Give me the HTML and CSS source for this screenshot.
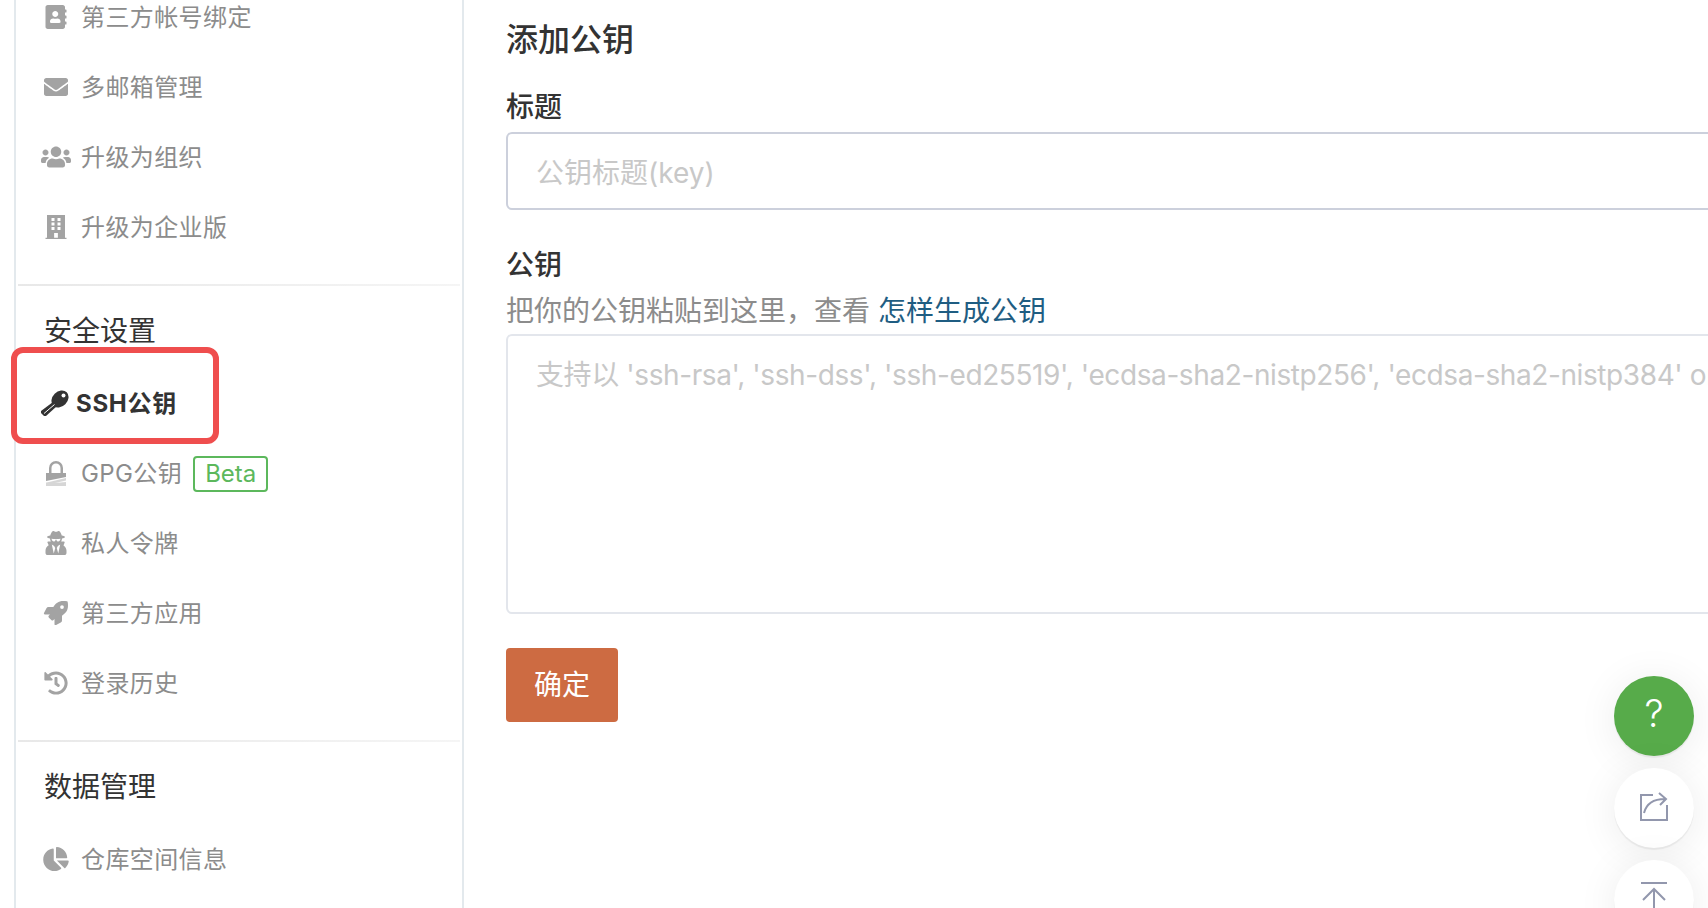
FILE: index.html
```html
<!DOCTYPE html>
<html lang="zh-CN">
<head>
  <meta charset="UTF-8">
  <meta name="viewport" content="width=device-width, initial-scale=1.0">
  <title>SSH公钥</title>
  <link rel="stylesheet" href="styles.css">
</head>
<body>
  <div class="page">
    <aside class="sidebar">
      <!-- page is scrolled: first row starts above the window -->
      <div class="group group-first">
        <a class="item">
          <svg class="icon" viewBox="0 0 448 512"><path d="M436 160c6.6 0 12-5.4 12-12v-40c0-6.6-5.4-12-12-12h-20V48c0-26.5-21.5-48-48-48H48C21.5 0 0 21.5 0 48v416c0 26.5 21.5 48 48 48h320c26.5 0 48-21.5 48-48v-48h20c6.6 0 12-5.4 12-12v-40c0-6.6-5.4-12-12-12h-20v-64h20c6.6 0 12-5.4 12-12v-40c0-6.6-5.4-12-12-12h-20v-64h20zm-228-32c35.3 0 64 28.7 64 64s-28.7 64-64 64-64-28.7-64-64 28.7-64 64-64zm112 236.8c0 10.6-10 19.2-22.4 19.2H118.4C106 384 96 375.4 96 364.8v-19.2c0-31.8 30.1-57.6 67.2-57.6h5c12.3 5.1 25.7 8 39.8 8s27.6-2.9 39.8-8h5c37.1 0 67.2 25.8 67.2 57.6v19.2z"/></svg>
          <span class="item-text">第三方帐号绑定</span>
        </a>
        <a class="item">
          <svg class="icon" viewBox="0 0 512 512"><path d="M502.3 190.8c3.9-3.1 9.7-.2 9.7 4.7V400c0 26.5-21.5 48-48 48H48c-26.5 0-48-21.5-48-48V195.6c0-5 5.7-7.8 9.7-4.7 22.4 17.4 52.1 39.5 154.1 113.6 21.1 15.4 56.7 47.8 92.2 47.6 35.7.3 72-32.8 92.3-47.6 102-74.1 131.6-96.3 154-113.7zM256 320c23.2.4 56.6-29.2 73.4-41.4 132.7-96.3 142.8-104.7 173.4-128.7 5.8-4.5 9.2-11.5 9.2-18.9v-19c0-26.5-21.5-48-48-48H48C21.5 64 0 85.5 0 112v19c0 7.4 3.4 14.3 9.2 18.9 30.6 23.9 40.7 32.4 173.4 128.7 16.8 12.2 50.2 41.8 73.4 41.4z"/></svg>
          <span class="item-text">多邮箱管理</span>
        </a>
        <a class="item">
          <svg class="icon" viewBox="0 0 640 512"><path d="M96 224c35.3 0 64-28.7 64-64s-28.7-64-64-64-64 28.7-64 64 28.7 64 64 64zm448 0c35.3 0 64-28.7 64-64s-28.7-64-64-64-64 28.7-64 64 28.7 64 64 64zm32 32h-64c-17.6 0-33.5 7.1-45.1 18.6 40.3 22.1 68.9 62 75.1 109.4h66c17.7 0 32-14.3 32-32v-32c0-35.3-28.7-64-64-64zm-256 0c61.9 0 112-50.1 112-112S381.9 32 320 32 208 82.1 208 144s50.1 112 112 112zm76.8 32h-8.3c-20.8 10-43.9 16-68.5 16s-47.6-6-68.5-16h-8.3C179.6 288 128 339.6 128 403.2V432c0 26.5 21.5 48 48 48h288c26.5 0 48-21.5 48-48v-28.8c0-63.6-51.6-115.2-115.2-115.2zm-223.7-13.4C161.5 263.1 145.6 256 128 256H64c-35.3 0-64 28.7-64 64v32c0 17.7 14.3 32 32 32h65.9c6.3-47.4 34.9-87.3 75.2-109.4z"/></svg>
          <span class="item-text">升级为组织</span>
        </a>
        <a class="item">
          <svg class="icon" viewBox="0 0 448 512"><path fill-rule="evenodd" d="M32 0h384v484h32v28H0v-28h32zM128 64v64h64V64zm128 0v64h64V64zM128 160v64h64v-64zm128 0v64h64v-64zM128 256v64h64v-64zm128 0v64h64v-64zM184 384v100h80V384z"/></svg>
          <span class="item-text">升级为企业版</span>
        </a>
      </div>

      <div class="group">
        <h3 class="group-title">安全设置</h3>
        <a class="item item-active">
          <svg class="icon-key" viewBox="0 0 28 26"><ellipse cx="19" cy="9" rx="9.500" ry="7.500" transform="rotate(-45 19 9)"/><path d="M12 12l4 4L5 26H3l-3-3v-2z"/><circle cx="22.500" cy="5.500" r="2" fill="#fff"/><path d="M13.500 14.500L3 23.500" stroke="#fff" stroke-width="1" fill="none"/></svg>
          <span class="item-text">SSH公钥</span>
        </a>
        <a class="item">
          <svg class="icon icon-gpg" viewBox="0 0 20 26"><path d="M3 14V8a7 7 0 0 1 14 0v6h-2.500V8a4.500 4.500 0 0 0-9 0v6z"/><path d="M0 13h20v4L0 21z"/><path d="M3 22l17-4v2.500L9 23l11-1v4H0v-3.500z" opacity=".45"/></svg>
          <span class="item-text">GPG公钥</span>
          <span class="badge">Beta</span>
        </a>
        <a class="item">
          <svg class="icon" viewBox="0 0 448 512"><path d="M383.900 308.300l23.900-62.600c4-10.500-3.700-21.700-15-21.700h-58.500c11-18.900 17.800-40.600 17.800-64v-.3c39.200-7.800 64-19.100 64-31.700 0-13.300-27.300-25.100-70.100-33-9.200-32.800-27-65.800-40.600-82.800-9.500-11.900-25.900-15.600-39.500-8.800l-27.600 13.800c-9 4.500-19.600 4.500-28.600 0L182.100 3.400c-13.600-6.800-30-3.100-39.500 8.800-13.500 17-31.400 50-40.600 82.800-42.700 7.900-70 19.700-70 33 0 12.600 24.800 23.900 64 31.700v.3c0 23.400 6.800 45.100 17.800 64H56.300c-11.500 0-19.200 11.700-14.700 22.300l25.800 60.200C27.300 329.800 0 372.700 0 422.400v44.800C0 491.900 20.100 512 44.800 512h358.400c24.700 0 44.800-20.100 44.800-44.800v-44.800c0-48.400-25.800-90.400-64.100-114.100zM176 480l-41.600-192 49.600 32 24 40-32 120zm96 0l-32-120 24-40 49.600-32L272 480zm41.700-298.500c-3.900 11.900-7 24.600-16.500 33.400-10.100 9.300-48 22.400-64-25-2.800-8.400-15.400-8.400-18.300 0-17 50.200-56 32.400-64 25-9.500-8.800-12.700-21.500-16.500-33.400-.8-2.500-6.300-5.700-6.300-5.800v-10.800c28.300 3.600 61 5.800 96 5.800s67.700-2.100 96-5.800v10.800c-.1.1-5.600 3.200-6.400 5.800z"/></svg>
          <span class="item-text">私人令牌</span>
        </a>
        <a class="item">
          <svg class="icon" viewBox="0 0 512 512"><path d="M505.050 19.100a15.890 15.890 0 0 0-12.200-12.200C460.650 0 435.460 0 410.360 0c-103.200 0-165.100 55.200-211.290 128H94.870A48 48 0 0 0 52 154.490l-49.420 98.800A24 24 0 0 0 24.070 288h103.770l-22.470 22.470a32 32 0 0 0 0 45.250l50.900 50.910a32 32 0 0 0 45.260 0L224 384.160V488a24 24 0 0 0 34.700 21.490l98.700-49.390a47.910 47.910 0 0 0 26.500-42.900V312.790c72.590-46.300 128-108.400 128-211.090.1-25.200.1-50.400-6.850-82.600zM384 168a40 40 0 1 1 40-40 40 40 0 0 1-40 40z"/></svg>
          <span class="item-text">第三方应用</span>
        </a>
        <a class="item">
          <svg class="icon" viewBox="0 0 512 512"><path d="M504 255.531c.253 136.640-111.180 248.372-247.820 248.468-59.015.042-113.223-20.530-155.822-54.911-11.077-8.940-11.905-25.541-1.839-35.607l11.267-11.267c8.609-8.609 22.353-9.551 31.891-1.984C173.062 425.135 212.781 440 256 440c101.705 0 184-82.311 184-184 0-101.705-82.311-184-184-184-48.814 0-93.149 18.969-126.068 49.932l50.754 50.754c10.080 10.080 2.941 27.314-11.313 27.314H24c-8.837 0-16-7.163-16-16V38.627c0-14.254 17.234-21.393 27.314-11.314l49.372 49.372C129.209 34.136 189.552 8 256 8c136.810 0 247.747 110.780 248 247.531zm-180.912 78.784l9.823-12.630c8.138-10.463 6.253-25.542-4.210-33.679L288 256.349V152c0-13.255-10.745-24-24-24h-16c-13.255 0-24 10.745-24 24v135.651l65.409 50.874c10.463 8.137 25.541 6.253 33.679-4.210z"/></svg>
          <span class="item-text">登录历史</span>
        </a>
      </div>

      <div class="group group-last">
        <h3 class="group-title">数据管理</h3>
        <a class="item">
          <svg class="icon" viewBox="0 0 544 512"><path d="M527.790 288H290.500l158.030 158.030c6.040 6.040 15.980 6.530 22.190.68 38.700-36.460 65.320-85.610 73.130-140.860 1.340-9.460-6.510-17.850-16.060-17.850zm-15.830-64.800C503.720 103.740 408.260 8.280 288.800.04 279.680-.59 272 7.100 272 16.240V240h223.770c9.140 0 16.820-7.680 16.190-16.800zM224 288V50.710c0-9.550-8.390-17.400-17.840-16.060C86.990 51.490-4.100 155.600.14 280.370 4.500 408.510 114.830 513.590 243.030 511.980c50.400-.63 96.970-16.870 135.260-44.030 7.900-5.600 8.420-17.230 1.570-24.080L224 288z"/></svg>
          <span class="item-text">仓库空间信息</span>
        </a>
      </div>
    </aside>

    <main class="content">
      <h2 class="title">添加公钥</h2>
      <form class="key-form">
        <label class="field-label" for="keyTitle">标题</label>
        <input class="field-input" type="text" id="keyTitle" placeholder="公钥标题(key)">

        <label class="field-label field-label-second" for="keyBody">公钥</label>
        <p class="help">把你的公钥粘贴到这里，查看 <a class="help-link">怎样生成公钥</a></p>
        <textarea class="field-area" id="keyBody" placeholder="支持以 'ssh-rsa', 'ssh-dss', 'ssh-ed25519', 'ecdsa-sha2-nistp256', 'ecdsa-sha2-nistp384' or 'ecdsa-sha2-nistp521' 开头"></textarea>

        <button class="submit" type="button"><span class="submit-text">确定</span></button>
      </form>
    </main>
  </div>

  <!-- annotation drawn over the screenshot -->
  <div class="highlight"></div>

  <div class="floats">
    <div class="float float-help"><span class="help-mark">?</span></div>
    <div class="float">
      <svg class="float-icon float-share" viewBox="0 0 30 30"><path d="M14 4H2v25h26V14M5 22c2-8 8-14 21-14M20 2l7 6-6 6" fill="none" stroke="#9297ad" stroke-width="2"/></svg>
    </div>
    <div class="float float-top">
      <svg class="float-icon float-up" viewBox="0 0 30 30"><path d="M2 2h26M15 8v30M4 19L15 8l11 11" fill="none" stroke="#9297ad" stroke-width="2"/></svg>
    </div>
  </div>
</body>
</html>
```

FILE: styles.css
```css
html, body {
  margin: 0;
  padding: 0;
  height: 100%;
  overflow: hidden;
  background-color: white;
}
body {
  font-family: Inter, "Noto Sans CJK SC", sans-serif;
  color: #333;
}
.page {
  display: flex;
  height: 908px;
  overflow: hidden;
}
.sidebar {
  flex: none;
  width: 446px;
  margin-left: 14px;
  border-left: 2px solid #e3e9ed;
  border-right: 2px solid #e3e9ed;
}
.group {
  padding-bottom: 22px;
  margin: 0 2px;
  border-bottom: 2px solid transparent;
  border-image: linear-gradient(to right, #e8e8e8, #f5f5f5) 1;
}
.group-first {
  margin-top: -18px;
}
.group-last {
  border-bottom: none;
}
.group-title {
  height: 82px;
  box-sizing: border-box;
  margin: 0;
  padding: 25px 0 0 26px;
  font-size: 28px;
  font-weight: 400;
  line-height: 40px;
  color: #333;
}
.item {
  display: flex;
  align-items: center;
  height: 70px;
  padding-left: 23px;
  font-size: 24px;
  color: #8c8c8c;
}
.item-text {
  padding-bottom: 4px;
  letter-spacing: 0.4px;
}
.icon {
  flex: none;
  width: 30px;
  height: 24px;
  margin-right: 10px;
  fill: #a3a3a3;
}
.icon-gpg {
  height: 26px;
}
.item-active {
  font-weight: 700;
  color: #333;
}
.item-active .item-text {
  letter-spacing: 0.7px;
}
.icon-key {
  flex: none;
  width: 28px;
  height: 26px;
  margin-right: 7px;
  fill: #333;
}
.badge {
  margin: 2px 0 0 11px;
  padding: 0 10px;
  height: 32px;
  line-height: 32px;
  border: 2px solid #5cb85c;
  border-radius: 4px;
  color: #5cb85c;
}
.content {
  flex: 1;
  min-width: 0;
  padding: 18px 0 0 42px;
  overflow: hidden;
}
.title {
  margin: 0;
  font-size: 32px;
  font-weight: 500;
  line-height: 44px;
}
.key-form {
  width: 2000px;
}
.field-label {
  display: block;
  margin-top: 25px;
  font-size: 28px;
  font-weight: 500;
  line-height: 40px;
}
.field-label-second {
  margin-top: 35px;
}
.field-input, .field-area {
  display: block;
  width: 100%;
  box-sizing: border-box;
  padding: 0 28px;
  border-radius: 6px;
  background: white;
  font-family: inherit;
  font-size: 28px;
  color: #333;
}
.field-input {
  height: 78px;
  margin-top: 5px;
  padding-top: 4px;
  border: 2px solid #ccd0dc;
}
.field-area {
  height: 280px;
  margin-top: 3px;
  padding-top: 19px;
  line-height: 40px;
  border: 2px solid #e3e6ec;
  resize: none;
}
.field-area::placeholder {
  letter-spacing: -0.4px;
}
.field-input::placeholder, .field-area::placeholder {
  color: #c8c8c8;
  opacity: 1;
}
.help {
  margin: 6px 0 0;
  font-size: 28px;
  line-height: 40px;
  color: #8c8c8c;
}
.help-link {
  color: #1f5d82;
}
.submit {
  display: block;
  width: 112px;
  height: 74px;
  margin-top: 34px;
  border: none;
  border-radius: 4px;
  background-color: #cd6b42;
  color: white;
  font-family: inherit;
  font-size: 28px;
}
.submit-text {
  display: block;
  padding-bottom: 4px;
}
.highlight {
  position: absolute;
  left: 11px;
  top: 347px;
  width: 208px;
  height: 97px;
  box-sizing: border-box;
  border: 6px solid #ef4e4e;
  border-radius: 12px;
}
.floats {
  position: absolute;
  top: 676px;
  right: 14px;
  display: flex;
  flex-direction: column;
  gap: 12px;
}
.float {
  display: flex;
  align-items: center;
  justify-content: center;
  width: 80px;
  height: 80px;
  border-radius: 50%;
  background-color: white;
  box-shadow: 0 2px 1px rgba(0,0,0,0.06), 0 4px 40px rgba(0,0,0,0.08);
}
.float-help {
  background-color: #57ab4a;
  font-size: 38px;
  font-weight: 300;
  color: white;
}
.help-mark {
  padding-bottom: 6px;
}
.float-icon {
  width: 30px;
  height: 30px;
}
.float-share {
  margin-bottom: 4px;
}
.float-up {
  margin-bottom: 8px;
}
```
